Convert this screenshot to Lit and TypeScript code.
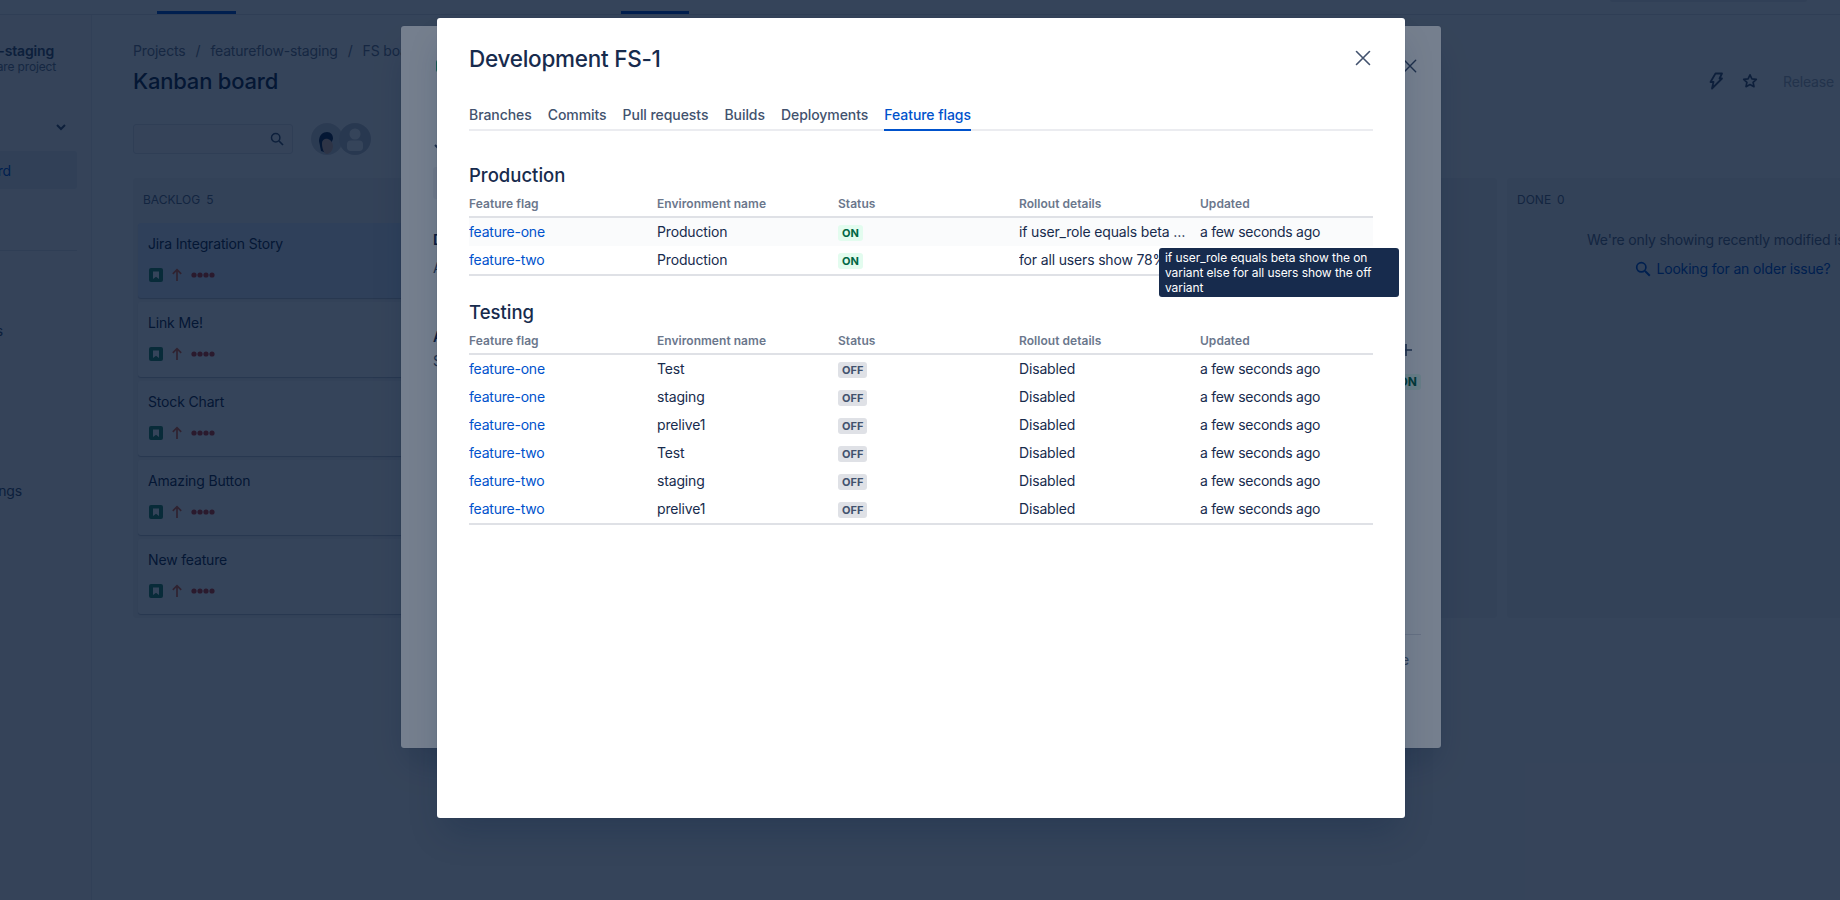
import { LitElement, html, css, svg } from 'lit';
import { customElement } from 'lit/decorators.js';

const PROD = [
  { flag: 'feature-one', env: 'Production', on: true, rollout: 'if user_role equals beta show the on variant else for all users show the off variant' },
  { flag: 'feature-two', env: 'Production', on: true, rollout: 'for all users show 78% on variant and 22% off variant' },
];

const ENVS = ['Test', 'staging', 'prelive1'];
const TESTING = ['feature-one', 'feature-two'].flatMap((flag) =>
  ENVS.map((env) => ({ flag, env, on: false, rollout: 'Disabled' })),
);

const CARDS = ['Jira Integration Story', 'Link Me!', 'Stock Chart', 'Amazing Button', 'New feature'];
const TABS = ['Branches', 'Commits', 'Pull requests', 'Builds', 'Deployments', 'Feature flags'];

const closeIcon = svg`<path d="M1.5 1.5l13 13M14.5 1.5l-13 13" fill="none" stroke="currentColor" stroke-width="1.6" stroke-linecap="round"/>`;

@customElement('app-root')
export class AppRoot extends LitElement {
  static styles = css`
    :host {
      display: block;
      position: relative;
      height: 900px;
      overflow: hidden;
      background: #fff;
      color: #172b4d;
      font-family: Inter, "Liberation Sans", sans-serif;
      font-size: 14px;
      letter-spacing: -0.16px;
    }
    svg { display: block; flex: none; }

    /* page under the dialogs */
    .topbar {
      height: 14px;
      border-bottom: 1px solid #dfe1e6;
      position: relative;
      display: flex;
    }
    .nav-mark { height: 3px; background: #0052cc; align-self: flex-end; }
    .nav-mark.a { width: 79px; margin-left: 157px; }
    .nav-mark.b { width: 68px; margin-left: 385px; }
    .top-search {
      width: 197px;
      height: 2px;
      margin-left: 921px;
      background: #ebecf0;
      border-radius: 0 0 3px 3px;
    }
    .page { display: flex; height: 885px; }
    .sidebar {
      width: 92px;
      flex: none;
      box-sizing: border-box;
      border-right: 1px solid #ebecf0;
      background: #fafbfc;
      overflow: hidden;
      padding-top: 28px;
    }
    .sb-row { display: flex; justify-content: flex-end; white-space: nowrap; }
    .sb-name { font-weight: 600; line-height: 16px; padding-right: 37px; color: #42526e; }
    .sb-sub { font-size: 12px; line-height: 16px; padding-right: 35px; color: #6b778c; }
    .sb-chev { margin-top: 48px; padding-right: 24px; color: #42526e; }
    .sb-selected {
      margin-top: 20px;
      margin-right: 14px;
      height: 38px;
      align-items: center;
      padding-right: 66px;
      color: #0052cc;
      background: #ebecf0;
      border-radius: 0 3px 3px 0;
    }
    .sb-sep { height: 1px; margin: 61px 14px 0 0; background: #dfe1e6; }
    .sb-issues { margin-top: 70px; line-height: 20px; padding-right: 88px; color: #42526e; }
    .sb-settings { margin-top: 140px; line-height: 20px; padding-right: 69px; color: #42526e; }

    .main { flex: 1; min-width: 0; padding: 26px 0 0 41px; overflow: hidden; }
    .crumbs { display: flex; gap: 10px; line-height: 20px; color: #6b778c; }
    .title-row { display: flex; align-items: center; margin-top: 5px; padding-right: 6px; height: 30px; }
    .title { font-size: 22px; font-weight: 500; line-height: 30px; flex: 1; letter-spacing: -0.2px; }
    .actions { display: flex; align-items: center; color: #42526e; }
    .star { margin-left: 18px; }
    .release { margin-left: 25px; color: #a5adba; }
    .filters { display: flex; align-items: center; margin-top: 27px; height: 32px; }
    .search {
      width: 160px;
      height: 30px;
      box-sizing: border-box;
      border: 1px solid #dfe1e6;
      border-radius: 3px;
      background: #fafbfc;
      display: flex;
      align-items: center;
      justify-content: flex-end;
      padding-right: 8px;
      color: #42526e;
    }
    .avatars { display: flex; margin-left: 18px; }
    .avatars svg + svg { margin-left: -4px; }
    .columns { display: flex; gap: 10px; margin-top: 23px; width: 1822px; }
    .column { width: 448px; height: 440px; flex: none; background: #f4f5f7; border-radius: 3px; }
    .col-head { display: flex; gap: 6px; padding: 14px 10px 0; height: 31px; font-size: 12px; line-height: 16px; color: #5e6c84; letter-spacing: 0; }
    .cards { display: flex; flex-direction: column; gap: 4px; padding: 0 5px; }
    .card {
      height: 75px;
      box-sizing: border-box;
      padding: 11px 10px 0;
      background: #fff;
      border-radius: 3px;
      box-shadow: 0 1px 1px rgba(9, 30, 66, 0.25);
      line-height: 20px;
    }
    .card.selected { background: #deebff; }
    .card-meta { display: flex; align-items: center; margin-top: 14px; padding-left: 1px; }
    .arrow { margin-left: 8px; color: #e0603a; }
    .dots { margin-left: 8px; }
    .older { text-align: center; color: #5e6c84; line-height: 20px; margin-top: 7px; padding-left: 4px; white-space: nowrap; }
    .older-link { display: flex; justify-content: center; align-items: center; gap: 5px; margin-top: 9px; padding-left: 4px; color: #0052cc; line-height: 20px; }

    /* dialogs */
    .blanket { position: absolute; inset: 0; background: rgba(0, 18, 46, 0.54); }
    .dialog {
      position: absolute;
      box-sizing: border-box;
      background: #fff;
      border-radius: 3px;
      box-shadow: 0 0 1px rgba(9, 30, 66, 0.31), 0 20px 32px -8px rgba(9, 30, 66, 0.25);
    }
    .issue { left: 401px; top: 26px; width: 1040px; height: 722px; padding: 34px 20px 0 32px; overflow: hidden; }
    .issue-head { display: flex; justify-content: space-between; padding-left: 3px; color: #42526e; height: 14px; }
    .issue-head .close { margin: -1px 4px 0 0; }
    .issue-mark { width: 14px; height: 12px; background: #36b37e; border-radius: 2px; }
    .issue-body { display: flex; justify-content: space-between; }
    .issue-left { line-height: 20px; }
    .chev { margin-top: 69px; color: #42526e; }
    .desc-box { margin-top: 16px; width: 300px; height: 32px; background: #f4f5f7; border-radius: 3px; }
    .desc { margin-top: 31px; font-weight: 600; }
    .desc-sub { margin-top: 8px; color: #42526e; }
    .activity { margin-top: 49px; font-weight: 600; }
    .show { margin-top: 4px; color: #42526e; }
    .issue-right { width: 260px; display: flex; flex-direction: column; }
    .plus { margin-top: 269px; align-self: flex-end; margin-right: 8px; color: #42526e; }
    .issue-on { margin-top: 15px; align-self: flex-end; }
    .issue-line { margin-top: 244px; height: 1px; background: #dfe1e6; }
    .config { margin-top: 15px; align-self: flex-end; margin-right: 12px; color: #6b778c; line-height: 20px; }

    .dev { left: 437px; top: 18px; width: 968px; height: 800px; padding: 25px 32px 0; }
    .dev-head { display: flex; justify-content: space-between; align-items: center; height: 32px; margin-bottom: -1px; }
    .dev-head .close { margin: -2px 2px 0 0; }
    .dev-title { font-size: 22.5px; font-weight: 500; line-height: 32px; letter-spacing: -0.26px; }
    .close { color: #42526e; }
    .tabs { display: flex; gap: 16px; margin-top: 31px; border-bottom: 2px solid #ebecf0; }
    .tab { line-height: 20px; padding-bottom: 4px; margin-bottom: -2px; font-weight: 500; letter-spacing: -0.06px; color: #42526e; border-bottom: 2px solid transparent; }
    .tab.active { color: #0052cc; border-bottom-color: #0052cc; }
    .section-title { margin-top: 32px; font-size: 18.5px; font-weight: 500; line-height: 24px; letter-spacing: 0; }
    .section-title.next { margin-top: 24px; }
    .table { margin-top: 9px; border-bottom: 2px solid #dfe1e6; }
    .thead, .tr { display: grid; grid-template-columns: 188px 181px 181px 181px 173px; }
    .thead {
      font-size: 12px;
      font-weight: 600;
      line-height: 16px;
      letter-spacing: 0.04px;
      color: #6b778c;
      padding-bottom: 4px;
      border-bottom: 2px solid #dfe1e6;
    }
    .tr { height: 28px; align-items: center; box-sizing: border-box; padding-bottom: 1px; }
    .tr.hover { background: #fafbfc; }
    .tr > div { white-space: nowrap; overflow: hidden; text-overflow: ellipsis; }
    .rollout { padding-right: 12px; }
    .updated { letter-spacing: -0.28px; }
    .link { color: #0052cc; letter-spacing: -0.22px; }
    .lozenge {
      display: inline-block;
      font-size: 11px;
      font-weight: 700;
      line-height: 16px;
      letter-spacing: 0;
      padding: 0 4px;
      border-radius: 3px;
      vertical-align: middle;
    }
    .lozenge.on { background: #e3fcef; color: #006644; }
    .lozenge.off { background: #dfe1e6; color: #42526e; }
    .tooltip {
      position: absolute;
      left: 722px;
      top: 230px;
      width: 240px;
      box-sizing: border-box;
      padding: 2px 6px;
      background: #172b4d;
      color: #fff;
      font-size: 12px;
      line-height: 15px;
      letter-spacing: -0.07px;
      border-radius: 3px;
    }
  `;

  renderTable(rows: typeof PROD, hoverFirst = false) {
    return html`
      <div class="table">
        <div class="thead">
          <div>Feature flag</div>
          <div>Environment name</div>
          <div>Status</div>
          <div>Rollout details</div>
          <div>Updated</div>
        </div>
        ${rows.map((row, i) => html`
          <div class="tr ${hoverFirst && i === 0 ? 'hover' : ''}">
            <div class="link">${row.flag}</div>
            <div>${row.env}</div>
            <div><span class="lozenge ${row.on ? 'on' : 'off'}">${row.on ? 'ON' : 'OFF'}</span></div>
            <div class="rollout">${row.rollout}</div>
            <div class="updated">a few seconds ago</div>
          </div>
        `)}
      </div>
    `;
  }

  renderCard(name: string, i: number) {
    return html`
      <div class="card ${i === 0 ? 'selected' : ''}">
        ${name}
        <div class="card-meta">
          <svg width="14" height="14" viewBox="0 0 14 14">
            <rect width="14" height="14" rx="2" fill="#2a8a62"/>
            <path d="M4 3.5h6v7.5L7 8.8 4 11z" fill="#fff"/>
          </svg>
          <svg class="arrow" width="12" height="14" viewBox="0 0 12 14">
            <path d="M6 13V2M1.8 5.8L6 1.6l4.2 4.2" fill="none" stroke="currentColor" stroke-width="1.7"/>
          </svg>
          <svg class="dots" width="24" height="6" viewBox="0 0 24 6" fill="#c9372c">
            <circle cx="3" cy="3" r="2.6"/><circle cx="9" cy="3" r="2.6"/><circle cx="15" cy="3" r="2.6"/><circle cx="21" cy="3" r="2.6"/>
          </svg>
        </div>
      </div>
    `;
  }

  render() {
    return html`
      <div class="topbar">
        <div class="nav-mark a"></div>
        <div class="nav-mark b"></div>
        <div class="top-search"></div>
      </div>
      <div class="page">
        <div class="sidebar">
          <div class="sb-row sb-name">featureflow-staging</div>
          <div class="sb-row sb-sub">Next-gen software project</div>
          <div class="sb-row sb-chev">
            <svg width="12" height="8" viewBox="0 0 12 8"><path d="M2 2l4 4 4-4" fill="none" stroke="currentColor" stroke-width="2"/></svg>
          </div>
          <div class="sb-row sb-selected">Kanban board</div>
          <div class="sb-sep"></div>
          <div class="sb-row sb-issues">Issues</div>
          <div class="sb-row sb-settings">Project settings</div>
        </div>
        <div class="main">
          <div class="crumbs">
            <span>Projects</span><span>/</span><span>featureflow-staging</span><span>/</span><span>FS board</span>
          </div>
          <div class="title-row">
            <div class="title">Kanban board</div>
            <div class="actions">
              <svg width="16" height="18" viewBox="0 0 16 18">
                <path d="M7.5 1.5H14L11.5 6.5H14L4 16.5 5.5 10H2.5z" fill="none" stroke="currentColor" stroke-width="1.8" stroke-linejoin="round"/>
              </svg>
              <svg class="star" width="16" height="16" viewBox="0 0 16 16">
                <path d="M8 1.8l1.9 4 4.4.5-3.2 3 .9 4.4L8 11.5l-4 2.2.9-4.4-3.2-3 4.4-.5z" fill="none" stroke="currentColor" stroke-width="1.7" stroke-linejoin="round"/>
              </svg>
              <span class="release">Release</span>
            </div>
          </div>
          <div class="filters">
            <div class="search">
              <svg width="14" height="14" viewBox="0 0 14 14">
                <circle cx="5.7" cy="5.7" r="4.2" fill="none" stroke="currentColor" stroke-width="1.5"/>
                <path d="M9 9l4 4" stroke="currentColor" stroke-width="1.7"/>
              </svg>
            </div>
            <div class="avatars">
              <svg width="32" height="32" viewBox="0 0 32 32">
                <circle cx="16" cy="16" r="16" fill="#d0d4db"/>
                <path d="M8 18c0-6 4-9 8-9 4 0 6 3 6 7l-6 14-6-2z" fill="#172b4d"/>
                <path d="M11 20c0-3 3-5 6-4 3 1 5 4 5 7 0 4-3 8-6 8-3 0-5-5-5-11z" fill="#d9b5a0"/>
              </svg>
              <svg width="32" height="32" viewBox="0 0 32 32">
                <circle cx="16" cy="16" r="16" fill="#c1c7d0"/>
                <circle cx="16" cy="11" r="5.5" fill="#fff"/>
                <rect x="8" y="17.5" width="16" height="10.5" rx="4" fill="#fff"/>
              </svg>
            </div>
          </div>
          <div class="columns">
            <div class="column">
              <div class="col-head"><span>BACKLOG</span><span>5</span></div>
              <div class="cards">${CARDS.map((c, i) => this.renderCard(c, i))}</div>
            </div>
            <div class="column"></div>
            <div class="column"></div>
            <div class="column">
              <div class="col-head"><span>DONE</span><span>0</span></div>
              <div class="older">We're only showing recently modified issues.</div>
              <div class="older-link">
                <svg width="16" height="16" viewBox="0 0 16 16">
                  <circle cx="6.3" cy="6.3" r="4.6" fill="none" stroke="currentColor" stroke-width="1.7"/>
                  <path d="M10 10l4.8 4.8" stroke="currentColor" stroke-width="2"/>
                </svg>
                Looking for an older issue?
              </div>
            </div>
          </div>
        </div>
      </div>

      <div class="blanket"></div>
      <div class="dialog issue">
        <div class="issue-head">
          <div class="issue-mark"></div>
          <svg class="close" width="14" height="14" viewBox="0 0 16 16">${closeIcon}</svg>
        </div>
        <div class="issue-body">
          <div class="issue-left">
            <svg class="chev" width="12" height="8" viewBox="0 0 12 8"><path d="M2 2l4 4 4-4" fill="none" stroke="currentColor" stroke-width="2"/></svg>
            <div class="desc-box"></div>
            <div class="desc">Description</div>
            <div class="desc-sub">Add a description...</div>
            <div class="activity">Activity</div>
            <div class="show">Show:</div>
          </div>
          <div class="issue-right">
            <svg class="plus" width="14" height="14" viewBox="0 0 14 14"><path d="M7 1v12M1 7h12" stroke="currentColor" stroke-width="1.6"/></svg>
            <div class="issue-on"><span class="lozenge on" style="font-size:12px">ON</span></div>
            <div class="issue-line"></div>
            <div class="config">Configure</div>
          </div>
        </div>
      </div>

      <div class="blanket"></div>
      <div class="dialog dev">
        <div class="dev-head">
          <div class="dev-title">Development FS-1</div>
          <svg class="close" width="16" height="16" viewBox="0 0 16 16">${closeIcon}</svg>
        </div>
        <div class="tabs">
          ${TABS.map((t) => html`<div class="tab ${t === 'Feature flags' ? 'active' : ''}">${t}</div>`)}
        </div>
        <div class="section-title">Production</div>
        ${this.renderTable(PROD, true)}
        <div class="section-title next">Testing</div>
        ${this.renderTable(TESTING)}
        <div class="tooltip">if user_role equals beta show the on variant else for all users show the off variant</div>
      </div>
    `;
  }
}
